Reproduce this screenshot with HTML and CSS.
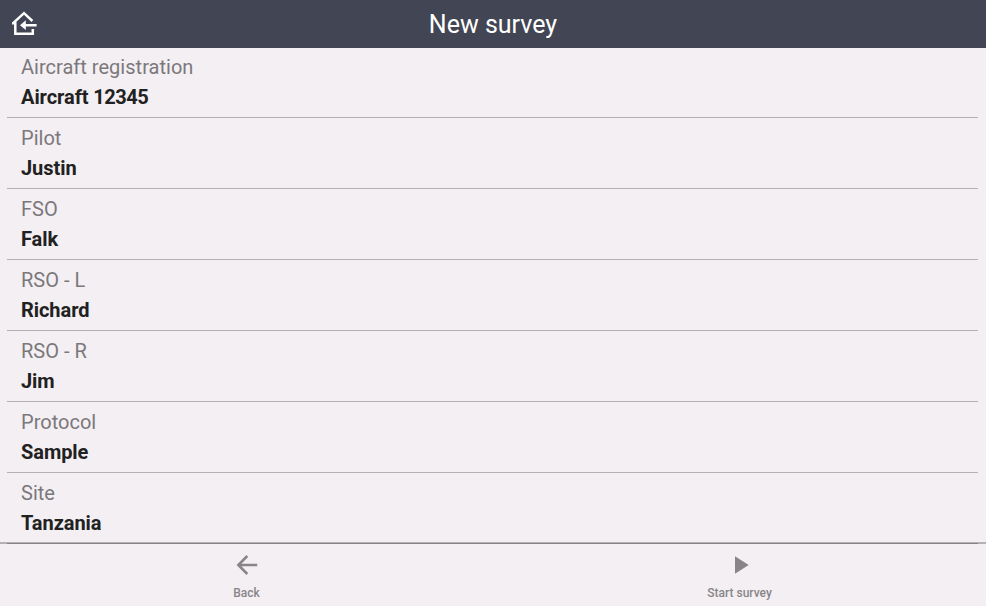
FILE: index.html
```html
<!DOCTYPE html>
<html lang="en">
<head>
<meta charset="utf-8">
<title>New survey</title>
<link rel="stylesheet" href="styles.css">
</head>
<body>
<header class="topbar">
  <svg class="home" viewBox="10 10 28 28" width="28" height="28" fill="none" stroke="#fff" stroke-width="2.5"><path d="M12 23.2H15.3V33.8H32.8V29M12.6 23.6 24 13.2l8.4 7.8M36.6 25.2H23"/><path fill="#fff" stroke="none" d="M20 25.2l5.8-4.9v9.8z"/></svg>
  <h1>New survey</h1>
</header>
<main class="list">
  <div class="row"><span class="label">Aircraft registration</span><span class="value">Aircraft <span class="number">12345</span></span></div>
  <div class="row"><span class="label">Pilot</span><span class="value">Justin</span></div>
  <div class="row"><span class="label">FSO</span><span class="value">Falk</span></div>
  <div class="row"><span class="label">RSO - L</span><span class="value">Richard</span></div>
  <div class="row"><span class="label">RSO - R</span><span class="value">Jim</span></div>
  <div class="row"><span class="label">Protocol</span><span class="value">Sample</span></div>
  <div class="row"><span class="label">Site</span><span class="value">Tanzania</span></div>
</main>
<footer class="bottombar">
  <div class="action"><svg width="24" height="24" viewBox="0 0 24 24" fill="none" stroke="#888588" stroke-width="2.5"><path d="M22.2 12H4M12.3 3l-9 9 9 9"/></svg><span>Back</span></div>
  <div class="action"><svg width="24" height="24" viewBox="0 0 24 24" fill="#888588"><path d="M7 3.2v17.6l13.7-8.8z"/></svg><span>Start survey</span></div>
</footer>
</body>
</html>
```

FILE: styles.css
```css
* { box-sizing: border-box; }
body { margin: 0; height: 606px; display: flex; flex-direction: column; overflow: hidden; background: #f3eff3; color: #212121; font-family: Roboto, "Liberation Sans", sans-serif; }
.topbar { display: grid; grid-template-columns: 48px 1fr 48px; align-items: center; height: 48px; flex: none; background: #424553; color: #fff; }
.home { margin-left: 10px; }
h1 { margin: 0; padding-top: 2px; text-align: center; font-size: 25px; font-weight: 400; line-height: 46px; }
.list { flex: none; padding: 0 8px 0 7px; }
.row { height: 71px; display: flex; flex-direction: column; padding: 5px 14px 0; font-size: 20px; line-height: 30px; border-bottom: 1px solid rgba(0, 0, 0, .26); }
.row:first-child { height: 70px; padding-top: 4px; }
.label { color: #7b787b; letter-spacing: .02px; }
.value { font-weight: 700; letter-spacing: -.06px; }
.number { letter-spacing: -.5px; }
.bottombar { display: flex; flex: none; height: 64px; margin-top: -2px; border-top: 2px solid rgba(0, 0, 0, .26); }
.action { flex: 1; display: flex; flex-direction: column; align-items: center; padding-top: 9px; font-size: 12px; font-weight: 500; color: #888588; }
.action span { margin-top: 8px; line-height: 16px; }
```
